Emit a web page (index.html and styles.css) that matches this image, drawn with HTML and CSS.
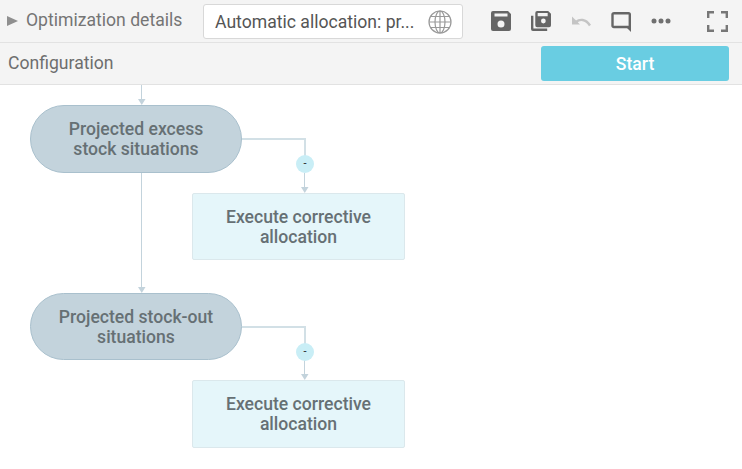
FILE: index.html
```html
<!DOCTYPE html>
<html lang="en">
<head>
  <meta charset="UTF-8">
  <title>Optimization details</title>
  <link rel="stylesheet" href="styles.css">
</head>
<body>
  <header class="toolbar">
    <span class="caret"></span>
    <span class="title">Optimization details</span>
    <div class="name-box">
      <span class="name-text">Automatic allocation: pr...</span>
      <svg class="globe" width="24" height="24" viewBox="0 0 24 24" fill="none" stroke="#999" stroke-width="1.2">
        <circle cx="12" cy="12" r="11"/>
        <ellipse cx="12" cy="12" rx="5" ry="11"/>
        <path d="M12 1v22M1 12h22M2.8 6.5h18.4M2.8 17.5h18.4"/>
      </svg>
    </div>
    <div class="tools">
      <svg class="save" width="20" height="20" viewBox="0 0 20 20">
        <path fill="#666" fill-rule="evenodd" d="M2 0h15l3 3v15a2 2 0 0 1-2 2H2a2 2 0 0 1-2-2V2a2 2 0 0 1 2-2zM3.500 2.500v3h13v-3zM10 9.500a3.500 3.500 0 1 0 0 7 3.500 3.500 0 0 0 0-7z"/>
      </svg>
      <svg class="save-as" width="20" height="20" viewBox="0 0 21 21">
        <path fill="#666" fill-rule="evenodd" d="M6.500 0H18l3 3v12a2 2 0 0 1-2 2H6.500a2 2 0 0 1-2-2V2a2 2 0 0 1 2-2zM7 2v3.500h10.500V2zM13 8a2.500 2.500 0 1 0 0 5 2.500 2.500 0 0 0 0-5z"/>
        <path fill="#666" d="M0 5h2.500v13.500H17V21H2a2 2 0 0 1-2-2z"/>
      </svg>
      <svg class="undo" width="20" height="12" viewBox="0 0 20 12" fill="none">
        <path fill="#c4c4c4" d="M0 1.500v8h8L4.800 6.300z"/>
        <path stroke="#c4c4c4" stroke-width="2.400" d="M4 7c3.500-3 9.500-3.500 14 3.500"/>
      </svg>
      <svg class="comment" width="20" height="20" viewBox="0 0 20 20" fill="none">
        <path stroke="#666" stroke-width="2.400" d="M2.500 1.200h15a1.300 1.300 0 0 1 1.300 1.300v12.500h-16a1.300 1.300 0 0 1-1.300-1.300V2.500a1.300 1.300 0 0 1 1.300-1.300z"/>
        <path fill="#666" d="M15 15h5v5z"/>
      </svg>
      <svg class="more" width="20" height="6" viewBox="0 0 20 6" fill="#707070">
        <circle cx="3" cy="3" r="2.500"/>
        <circle cx="10" cy="3" r="2.500"/>
        <circle cx="17" cy="3" r="2.500"/>
      </svg>
      <svg class="fullscreen" width="21" height="21" viewBox="0 0 21 21" fill="none" stroke="#777" stroke-width="2.400">
        <path d="M1.200 7V1.200H7M14 1.200h5.800V7M1.200 14v5.800H7M14 19.800h5.800V14"/>
      </svg>
    </div>
  </header>

  <div class="config-bar">
    <span class="config-label">Configuration</span>
    <button class="start-btn">Start</button>
  </div>

  <main class="canvas">
    <!-- connectors, coordinates relative to the canvas -->
    <svg class="links" width="742" height="384" viewBox="0 0 742 384" fill="none">
      <g stroke="#c3d3dc">
        <path d="M141.500 0v14"/>
        <path d="M141.500 88v114"/>
        <path d="M304.500 88v15M304.500 275v15"/>
      </g>
      <g stroke="#d2e0e6" stroke-width="2">
        <path d="M242 54h63v18"/>
        <path d="M242 242h63v18"/>
      </g>
      <g fill="#c3d3dc">
        <path d="M138 14h7.500l-3.750 6z"/>
        <path d="M138 202h7.500l-3.750 6z"/>
        <path d="M301 102h7.500l-3.750 6z"/>
        <path d="M301 289h7.500l-3.750 6z"/>
      </g>
    </svg>

    <div class="node pill pill-one">Projected excess<br>stock situations</div>
    <div class="node action action-one">Execute corrective<br>allocation</div>
    <div class="node pill pill-two">Projected stock-out<br>situations</div>
    <div class="node action action-two">Execute corrective<br>allocation</div>

    <span class="badge badge-one">-</span>
    <span class="badge badge-two">-</span>
  </main>
</body>
</html>
```

FILE: styles.css
```css
body {
  margin: 0;
  font-family: Roboto, sans-serif;
  font-size: 17.6px;
  color: #6e6e6e;
  background: #fff;
  overflow: hidden;
}
.toolbar {
  display: flex;
  align-items: center;
  height: 42px;
  padding-left: 7px;
  background: #f4f4f4;
  border-bottom: 1px solid #e2e2e2;
}
.caret {
  width: 0;
  height: 0;
  border-left: 11px solid #8f8f8f;
  border-top: 5px solid transparent;
  border-bottom: 5px solid transparent;
  margin-right: 8px;
}
.title {
  width: 177px;
  margin-top: -2px;
  color: #757575;
}
.name-box {
  display: flex;
  align-items: center;
  justify-content: space-between;
  box-sizing: border-box;
  width: 260px;
  height: 35px;
  padding: 0 10px 0 11px;
  margin-top: 1px;
  background: #fff;
  border: 1px solid #d8d8d8;
  border-radius: 3px;
  color: #555;
}
.name-text {
  white-space: nowrap;
}
.tools {
  display: flex;
  align-items: center;
  padding-left: 28px;
}
.save-as { margin-left: 20px; }
.undo { margin-left: 21px; }
.comment { margin-left: 19px; margin-top: 2px; }
.more { margin-left: 20px; }
.fullscreen { margin-left: 36px; }
.config-bar {
  display: flex;
  align-items: center;
  justify-content: space-between;
  height: 41px;
  padding: 0 13px 0 8px;
  background: #f4f4f4;
  border-bottom: 1px solid #e2e2e2;
}
.config-label {
  margin-top: -2px;
}
.start-btn {
  width: 188px;
  height: 35px;
  padding: 0;
  border: none;
  border-radius: 3px;
  background: #69cde2;
  color: #fff;
  font-family: inherit;
  font-size: 17.6px;
  font-weight: 500;
}
.canvas {
  position: relative;
  height: 384px;
}
.links {
  position: absolute;
  left: 0;
  top: 0;
}
.node {
  position: absolute;
  display: flex;
  align-items: center;
  justify-content: center;
  box-sizing: border-box;
  text-align: center;
  font-weight: 500;
  line-height: 20px;
  color: #667074;
}
.pill {
  left: 30px;
  width: 212px;
  background: #c3d3dc;
  border: 1px solid #a9c0cd;
  border-radius: 34px;
}
.pill-one { top: 20px; height: 68px; }
.pill-two { top: 208px; height: 67px; }
.action {
  left: 192px;
  width: 213px;
  background: #e5f6fa;
  border: 1px solid #dbe8ec;
  border-radius: 2px;
}
.action-one { top: 108px; height: 67px; }
.action-two { top: 295px; height: 68px; }
.badge {
  position: absolute;
  left: 296px;
  width: 18px;
  height: 18px;
  border-radius: 50%;
  background: #c9eef6;
  color: #222;
  font-size: 11px;
  line-height: 18px;
  text-align: center;
}
.badge-one { top: 70px; }
.badge-two { top: 258px; }
```
